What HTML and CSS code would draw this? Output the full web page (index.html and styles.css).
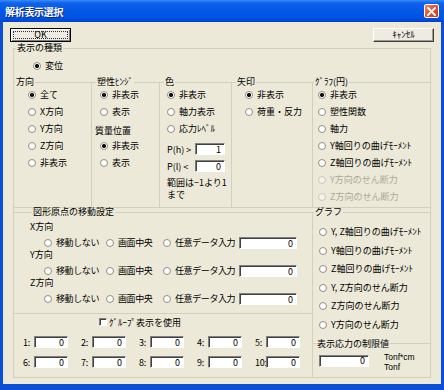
FILE: index.html
```html
<!DOCTYPE html>
<html>
<head>
<meta charset="utf-8">
<title>解析表示選択</title>
<link rel="stylesheet" href="styles.css">
</head>
<body>

<div class="window">
  <div class="titlebar">
    <span class="title">解析表示選択</span>
    <span class="closebtn">
      <svg width="9" height="9" viewBox="0 0 9 9"><path d="M1 1L8 8M8 1L1 8" stroke="#fff" stroke-width="1.8" stroke-linecap="square"/></svg>
    </span>
  </div>

  <div class="client">
    <div class="btnrow">
      <button class="btn btn-default">OK</button>
      <button class="btn">ｷｬﾝｾﾙ</button>
    </div>

    <fieldset class="grp outer">
      <legend>表示の種類</legend>
      <div class="kind"><label class="opt"><i class="rb on"></i>変位</label></div>

      <div class="topgroups">
        <fieldset class="grp g-dir">
          <legend>方向</legend>
          <div class="opts">
            <label class="opt"><i class="rb on"></i>全て</label>
            <label class="opt"><i class="rb"></i>X方向</label>
            <label class="opt"><i class="rb"></i>Y方向</label>
            <label class="opt"><i class="rb"></i>Z方向</label>
            <label class="opt"><i class="rb"></i>非表示</label>
          </div>
        </fieldset>

        <fieldset class="grp g-hinge">
          <legend>塑性ﾋﾝｼﾞ</legend>
          <div class="opts">
            <label class="opt"><i class="rb on"></i>非表示</label>
            <label class="opt"><i class="rb"></i>表示</label>
            <div class="sublabel">質量位置</div>
            <label class="opt"><i class="rb on"></i>非表示</label>
            <label class="opt"><i class="rb"></i>表示</label>
          </div>
        </fieldset>

        <fieldset class="grp g-color">
          <legend>色</legend>
          <div class="opts">
            <label class="opt"><i class="rb on"></i>非表示</label>
            <label class="opt"><i class="rb"></i>軸力表示</label>
            <label class="opt"><i class="rb"></i>応力ﾚﾍﾞﾙ</label>
            <div class="prow first"><span class="plabel">P(h) &gt;</span><input class="tb tb-p" type="text" value="1"></div>
            <div class="prow"><span class="plabel">P(l) &lt;</span><input class="tb tb-p" type="text" value="0"></div>
            <div class="note">範囲は−1より1<br>まで</div>
          </div>
        </fieldset>

        <fieldset class="grp g-arrow">
          <legend>矢印</legend>
          <div class="opts">
            <label class="opt"><i class="rb on"></i>非表示</label>
            <label class="opt"><i class="rb"></i>荷重・反力</label>
          </div>
        </fieldset>

        <fieldset class="grp g-circle">
          <legend>ｸﾞﾗﾌ(円)</legend>
          <div class="opts">
            <label class="opt"><i class="rb on"></i>非表示</label>
            <label class="opt"><i class="rb"></i>塑性関数</label>
            <label class="opt"><i class="rb"></i>軸力</label>
            <label class="opt"><i class="rb"></i>Y軸回りの曲げﾓｰﾒﾝﾄ</label>
            <label class="opt"><i class="rb"></i>Z軸回りの曲げﾓｰﾒﾝﾄ</label>
            <label class="opt off"><i class="rb"></i>Y方向のせん断力</label>
            <label class="opt off"><i class="rb"></i>Z方向のせん断力</label>
          </div>
        </fieldset>
      </div>

      <div class="lower">
        <div class="lower-left">
          <fieldset class="grp g-origin">
            <legend>図形原点の移動設定</legend>
            <div class="axis">X方向</div>
            <div class="moverow">
              <label class="opt"><i class="rb"></i>移動しない</label>
              <label class="opt"><i class="rb"></i>画面中央</label>
              <label class="opt"><i class="rb"></i>任意データ入力</label>
              <input class="tb tb-move" type="text" value="0">
            </div>
            <div class="axis">Y方向</div>
            <div class="moverow">
              <label class="opt"><i class="rb"></i>移動しない</label>
              <label class="opt"><i class="rb"></i>画面中央</label>
              <label class="opt"><i class="rb"></i>任意データ入力</label>
              <input class="tb tb-move" type="text" value="0">
            </div>
            <div class="axis">Z方向</div>
            <div class="moverow">
              <label class="opt"><i class="rb"></i>移動しない</label>
              <label class="opt"><i class="rb"></i>画面中央</label>
              <label class="opt"><i class="rb"></i>任意データ入力</label>
              <input class="tb tb-move" type="text" value="0">
            </div>
          </fieldset>

          <div class="grp g-group">
            <label class="chkrow"><i class="cb"></i>ｸﾞﾙｰﾌﾟ表示を使用</label>
            <div class="numgrid">
              <div class="num"><span>1:</span><input class="tb tb-num" type="text" value="0"></div>
              <div class="num"><span>2:</span><input class="tb tb-num" type="text" value="0"></div>
              <div class="num"><span>3:</span><input class="tb tb-num" type="text" value="0"></div>
              <div class="num"><span>4:</span><input class="tb tb-num" type="text" value="0"></div>
              <div class="num"><span>5:</span><input class="tb tb-num" type="text" value="0"></div>
              <div class="num"><span>6:</span><input class="tb tb-num" type="text" value="0"></div>
              <div class="num"><span>7:</span><input class="tb tb-num" type="text" value="0"></div>
              <div class="num"><span>8:</span><input class="tb tb-num" type="text" value="0"></div>
              <div class="num"><span>9:</span><input class="tb tb-num" type="text" value="0"></div>
              <div class="num"><span>10:</span><input class="tb tb-num" type="text" value="0"></div>
            </div>
          </div>
        </div>

        <fieldset class="grp g-graph">
          <legend>グラフ</legend>
          <div class="opts">
            <label class="opt"><i class="rb"></i>Y, Z軸回りの曲げﾓｰﾒﾝﾄ</label>
            <label class="opt"><i class="rb"></i>Y軸回りの曲げﾓｰﾒﾝﾄ</label>
            <label class="opt"><i class="rb"></i>Z軸回りの曲げﾓｰﾒﾝﾄ</label>
            <label class="opt"><i class="rb"></i>Y, Z方向のせん断力</label>
            <label class="opt"><i class="rb"></i>Z方向のせん断力</label>
            <label class="opt"><i class="rb"></i>Y方向のせん断力</label>
          </div>
          <fieldset class="grp g-limit">
            <legend>表示応力の制限値</legend>
            <div class="limitrow">
              <input class="tb tb-limit" type="text" value="0">
              <div class="units">Tonf*cm<br>Tonf</div>
            </div>
          </fieldset>
        </fieldset>
      </div>
    </fieldset>
  </div>
</div>

</body>
</html>
```

FILE: styles.css
```css
html, body { margin: 0; padding: 0; overflow: hidden; }
body { font-family: "Noto Sans CJK JP", "DejaVu Sans", sans-serif; font-size: 9px; color: #000; background: #0b4fd8; }

.window { width: 444px; height: 390px; background: #0b4fd8; display: flex; flex-direction: column; }

.titlebar { height: 22px; flex: none; display: flex; align-items: center; justify-content: space-between; padding: 0 5px 0 5px; box-sizing: border-box;
  background: linear-gradient(#3a8cf6 0, #0f63ea 3px, #0358e6 45%, #0054e3 80%, #0042cf 100%); }
.title { color: #fff; font-weight: bold; font-size: 10px; letter-spacing: -0.3px; text-shadow: 1px 1px 0 #0b2a7a; }
.closebtn { width: 15px; height: 14px; box-sizing: border-box; border: 1px solid #fff; border-radius: 2px; display: flex; align-items: center; justify-content: center;
  background: linear-gradient(135deg, #ef8a6a 0, #df5a36 45%, #c8391a 100%); }

.client { flex: none; margin: 0 3px; height: 362px; background: #ece9d8; padding: 6px 7px 0 7px; box-sizing: border-box; }

.btnrow { display: flex; justify-content: space-between; height: 14px; }
.btn { width: 61px; height: 14px; padding: 0; margin: 0; font: inherit; font-size: 9px; line-height: 10px; color: #000; background: #eeece2;
  border: 1px solid; border-color: #fff #404040 #404040 #fff; box-shadow: inset -1px -1px 0 #9d9a8c; }
.btn-default { border-color: #000; box-shadow: inset 1px 1px 0 #fff, inset -1px -1px 0 #808080; outline: 1px dotted #333; outline-offset: -4px; }

/* group boxes */
.grp { margin: 0; padding: 0; min-width: 0; border: 1px solid #d0d0bf; box-sizing: border-box; }
.grp legend { padding: 0 1px; margin-left: 1px; line-height: 12px; height: 12px; }

.outer { width: 418px; height: 336px; margin-left: 3px; }
.outer > legend { margin-left: 2px; }

.opt { display: flex; align-items: center; height: 12px; line-height: 12px; white-space: nowrap; }
.opt.off { color: #aca899; }
.rb { display: inline-block; flex: none; width: 8px; height: 8px; border-radius: 50%; margin-right: 4px; box-sizing: border-box;
  border: 1px solid #8f8e88; background: #fff; }
.rb.on { background: radial-gradient(circle, #111 0, #111 1.8px, #fff 2.3px); }
.opt.off .rb { border-color: #cac8bb; background: #f5f4ea; }

.kind { margin-top: 6px; padding-left: 19px; }

.topgroups { display: flex; margin: 4px -1px 0; height: 132px; }
.topgroups > .grp { height: 132px; }
.topgroups > .grp + .grp { margin-left: -1px; }
.opts { display: flex; flex-direction: column; gap: 5px; margin-top: 1px; }

.g-dir { width: 79px; }
.g-dir .opts { padding-left: 14px; }
.g-hinge { width: 69px; }
.g-hinge legend { margin-left: 4px; }
.g-hinge .opts { padding-left: 8px; }
.sublabel { height: 12px; line-height: 12px; margin-left: -5px; margin-top: 2px; margin-bottom: -2px; }
.g-color { width: 73px; }
.g-color legend { margin-left: 4px; }
.g-color .opts { padding-left: 7px; }
.g-arrow { width: 82px; }
.g-arrow legend { margin-left: 4px; }
.g-arrow .opts { padding-left: 13px; }
.g-circle { width: 119px; }
.g-circle .opts { padding-left: 5px; }

.prow { display: flex; align-items: center; height: 12px; }
.prow.first { margin-top: 3px; }
.plabel { width: 28px; flex: none; white-space: nowrap; }
.note { line-height: 12px; }

/* text boxes */
.tb { box-sizing: border-box; height: 12px; margin: 0; padding: 0 3px 0 0; font: inherit; font-size: 9px; text-align: right; color: #000; background: #fff;
  border: 1px solid; border-color: #808080 #fff #fff #808080; box-shadow: inset 1px 1px 0 #404040; outline: none; }
.tb-p { width: 30px; }
.tb-move { width: 58px; }
.tb-num { width: 34px; }
.tb-limit { width: 50px; }

.lower { display: flex; margin: -2px -1px 0; height: 172px; }
.lower-left { width: 300px; flex: none; display: flex; flex-direction: column; }

.g-origin { height: 108px; padding: 3px 0 0 16px; }
.g-origin > legend { margin-left: 2px; }
.axis { height: 11px; line-height: 11px; }
.moverow { display: grid; grid-template-columns: 62px 57px 76px 58px; align-items: center; height: 12px; margin: 5px 0 0 14px; letter-spacing: -0.4px; }

.g-group { height: 65px; margin-top: -1px; padding-top: 2px; padding-left: 0; }
.chkrow { display: flex; align-items: center; height: 12px; padding-left: 85px; }
.cb { display: inline-block; width: 8px; height: 8px; box-sizing: border-box; margin-right: 2px; background: #fff;
  border: 1px solid; border-color: #808080 #fff #fff #808080; box-shadow: inset 1px 1px 0 #404040; }
.numgrid { display: grid; grid-template-columns: repeat(5, 58px); row-gap: 8px; margin-top: 8px; padding-left: 9px; }
.num { display: flex; align-items: center; height: 12px; }
.num span { width: 11px; flex: none; white-space: nowrap; letter-spacing: -0.3px; }

.g-graph { width: 119px; flex: none; margin-left: -1px; height: 172px; }
.g-graph .opts { padding-left: 6px; margin-top: 8px; gap: 6.6px; }
.g-limit { margin: 7px -1px 0 -1px; height: 40px; }
.g-limit legend { margin-left: 3px; }
.limitrow { display: flex; align-items: flex-start; margin-top: 5px; padding-left: 6px; }
.units { margin: -3px 0 0 15px; font-family: "Liberation Sans", sans-serif; font-size: 8.5px; line-height: 10px; }
```
